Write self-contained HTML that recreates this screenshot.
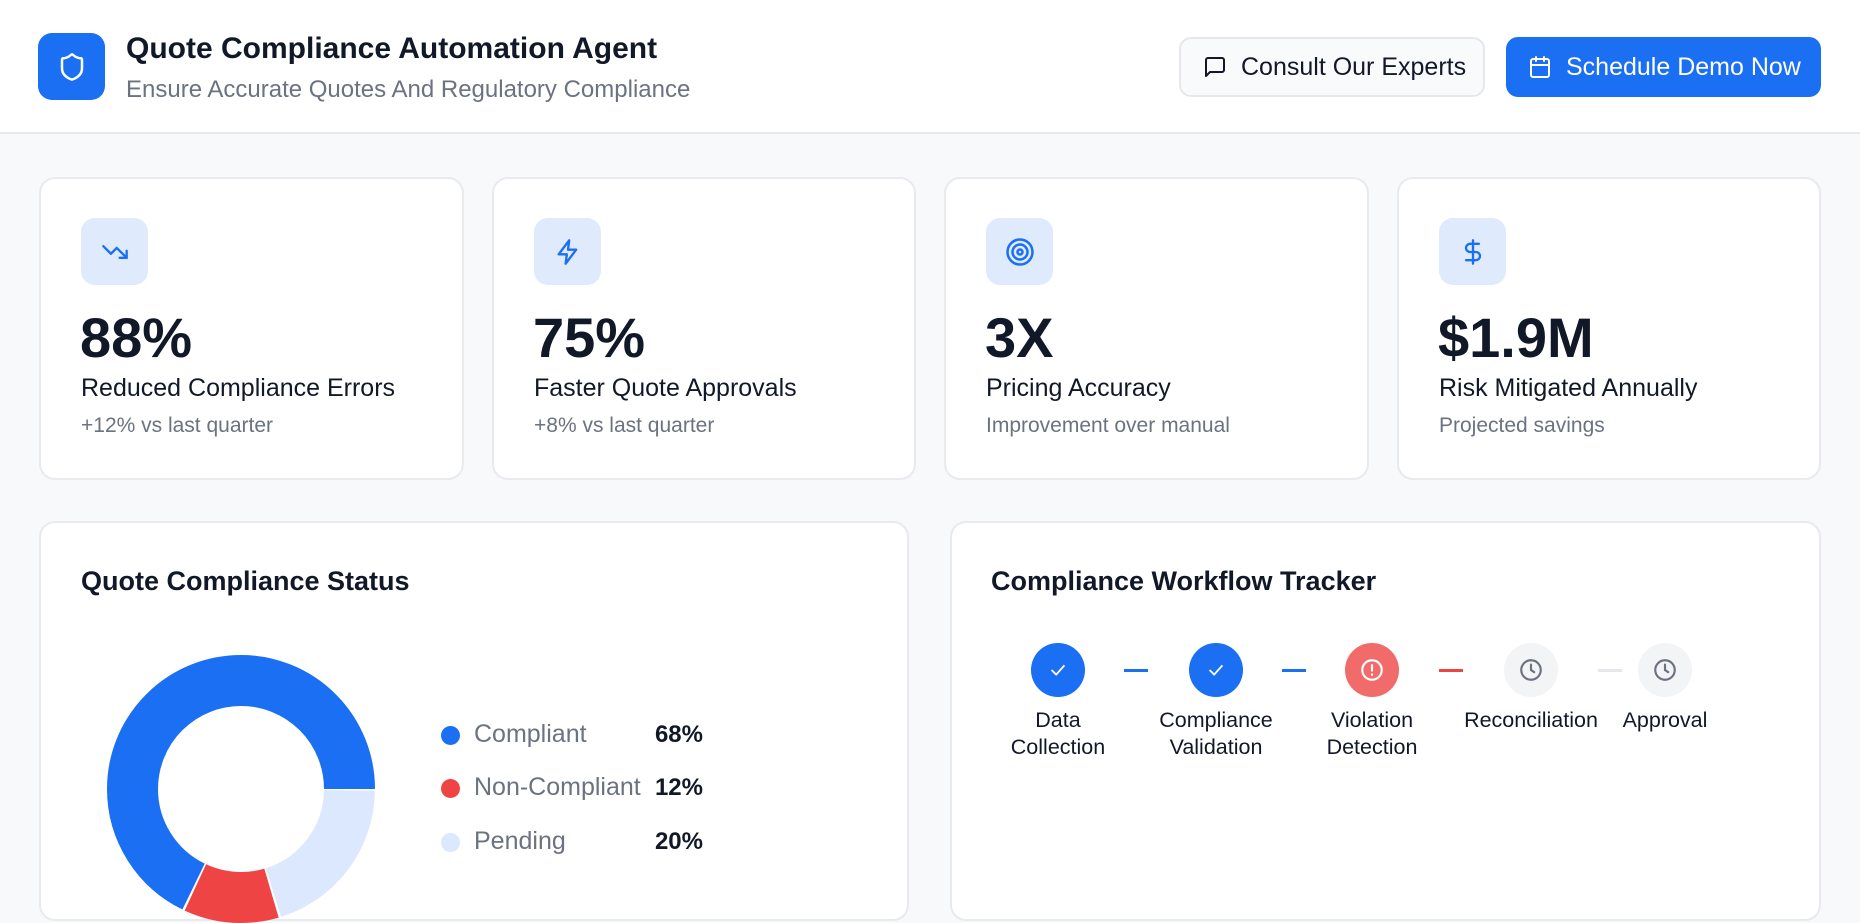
<!DOCTYPE html>
<html><head><meta charset="utf-8"><style>
*{box-sizing:border-box;margin:0;padding:0}
body{width:1860px;height:876px;overflow:hidden;background:#f8f9fb;font-family:"Liberation Sans",sans-serif;color:#111827;position:relative}
.abs{position:absolute}
.hdr{left:0;top:0;width:1860px;height:134px;background:#fff;border-bottom:2px solid #e6e8ec}
.logo{left:38px;top:33px;width:67px;height:67px;background:#1b6ff2;border-radius:14px;display:flex;align-items:center;justify-content:center}
.title{left:126px;top:32px;font-size:30px;font-weight:700;color:#111827}
.sub{left:126px;top:76px;font-size:24px;color:#6b7280}
.btn{top:37px;height:60px;border-radius:12px;display:flex;align-items:center;font-size:25px}
.b1{left:1179px;width:306px;background:#f9fafb;border:2px solid #e5e7eb;color:#111827;padding-left:22px}
.b2{left:1506px;width:315px;background:#1b6ff2;color:#fff;padding-left:22px}
.btn svg{margin-right:14px;flex:none}
.card{background:#fff;border:2px solid #e8eaee;border-radius:16px}
.sc{top:177px;height:303px}
.ib{width:67px;height:67px;background:#dfeafd;border-radius:14px;left:40px;top:39px;display:flex;align-items:center;justify-content:center}
.num{left:39px;top:126px;font-size:56px;font-weight:700;color:#111827}
.lbl{left:40px;top:195px;font-size:25px;color:#111827}
.sm{left:40px;top:235px;font-size:21px;color:#6b7280}
.ct{font-size:27px;font-weight:700;color:#111827}
.leg{font-size:25px;color:#6b7280}
.pct{font-size:24px;font-weight:700;color:#111827;text-align:right;width:70px}
.dot{width:19px;height:19px;border-radius:50%}
.st{width:54px;height:54px;border-radius:50%;display:flex;align-items:center;justify-content:center;top:643px}
.sl{top:707px;font-size:21.5px;color:#111827;text-align:center;width:170px;line-height:27px}
.cn{top:669px;width:24px;height:3px}
</style></head><body>
<div class="abs hdr"></div>
<div class="abs logo"><svg width="30" height="30" viewBox="0 0 24 24" fill="none" stroke="#fff" stroke-width="2" stroke-linecap="round" stroke-linejoin="round"><path d="M20 13c0 5-3.5 7.5-7.7 9a1 1 0 0 1-.7 0C7.5 20.5 4 18 4 13V6a1 1 0 0 1 1-1c2 0 4.5-1.2 6.2-2.7a1.2 1.2 0 0 1 1.6 0C14.5 3.8 17 5 19 5a1 1 0 0 1 1 1z"/></svg></div>
<div class="abs title">Quote Compliance Automation Agent</div>
<div class="abs sub">Ensure Accurate Quotes And Regulatory Compliance</div>
<div class="abs btn b1"><svg width="24" height="24" viewBox="0 0 24 24" fill="none" stroke="#111827" stroke-width="2" stroke-linejoin="round"><path d="M21 15a2 2 0 0 1-2 2H7l-4 4V5a2 2 0 0 1 2-2h14a2 2 0 0 1 2 2z"/></svg>Consult Our Experts</div>
<div class="abs btn b2"><svg width="24" height="24" viewBox="0 0 24 24" fill="none" stroke="#fff" stroke-width="2" stroke-linecap="round"><rect x="3" y="4" width="18" height="18" rx="2"/><path d="M16 2v4M8 2v4M3 10h18"/></svg>Schedule Demo Now</div>

<div class="abs card sc" style="left:39px;width:425px">
<div class="abs ib"><svg width="28" height="28" viewBox="0 0 24 24" fill="none" stroke="#1b6ff2" stroke-width="2" stroke-linecap="round" stroke-linejoin="round"><path d="M22 17l-8.5-8.5-5 5L2 7"/><path d="M16 17h6v-6"/></svg></div>
<div class="abs num">88%</div><div class="abs lbl">Reduced Compliance Errors</div><div class="abs sm">+12% vs last quarter</div></div>
<div class="abs card sc" style="left:492px;width:424px">
<div class="abs ib"><svg width="28" height="28" viewBox="0 0 24 24" fill="none" stroke="#1b6ff2" stroke-width="2" stroke-linejoin="round"><path d="M13 2L4 14h7l-1 8 9-12h-7z"/></svg></div>
<div class="abs num">75%</div><div class="abs lbl">Faster Quote Approvals</div><div class="abs sm">+8% vs last quarter</div></div>
<div class="abs card sc" style="left:944px;width:425px">
<div class="abs ib"><svg width="30" height="30" viewBox="0 0 24 24" fill="none" stroke="#1b6ff2" stroke-width="2"><circle cx="12" cy="12" r="10"/><circle cx="12" cy="12" r="6"/><circle cx="12" cy="12" r="2"/></svg></div>
<div class="abs num">3X</div><div class="abs lbl">Pricing Accuracy</div><div class="abs sm">Improvement over manual</div></div>
<div class="abs card sc" style="left:1397px;width:424px">
<div class="abs ib"><svg width="28" height="28" viewBox="0 0 24 24" fill="none" stroke="#1b6ff2" stroke-width="2" stroke-linecap="round"><path d="M12 2v20M17 5H9.5a3.5 3.5 0 0 0 0 7h5a3.5 3.5 0 0 1 0 7H6"/></svg></div>
<div class="abs num">$1.9M</div><div class="abs lbl">Risk Mitigated Annually</div><div class="abs sm">Projected savings</div></div>

<div class="abs card" style="left:39px;top:521px;width:870px;height:400px"></div>
<div class="abs ct" style="left:81px;top:566px">Quote Compliance Status</div>
<svg class="abs" style="left:107px;top:655px" width="268" height="268" viewBox="0 0 268 268">
<g transform="translate(134 134) scale(1 -1)" fill="none" stroke-width="51">
<circle r="108.5" stroke="#1b6ff2" stroke-dasharray="462 220"/>
<circle r="108.5" stroke="#ef4444" stroke-dasharray="0 464 78 200"/>
<circle r="108.5" stroke="#dce8fd" stroke-dasharray="0 544 136 2"/>
</g></svg>
<div class="abs dot" style="left:441px;top:726px;background:#1b6ff2"></div>
<div class="abs leg" style="left:474px;top:720px">Compliant</div><div class="abs pct" style="left:633px;top:721px">68%</div>
<div class="abs dot" style="left:441px;top:779px;background:#ef4444"></div>
<div class="abs leg" style="left:474px;top:773px">Non-Compliant</div><div class="abs pct" style="left:633px;top:774px">12%</div>
<div class="abs dot" style="left:441px;top:833px;background:#dce8fd"></div>
<div class="abs leg" style="left:474px;top:827px">Pending</div><div class="abs pct" style="left:633px;top:828px">20%</div>

<div class="abs card" style="left:950px;top:521px;width:871px;height:400px"></div>
<div class="abs ct" style="left:991px;top:566px">Compliance Workflow Tracker</div>
<div class="abs st" style="left:1031px;background:#1b6ff2"><svg width="22" height="22" viewBox="0 0 24 24" fill="none" stroke="#fff" stroke-width="2"><path d="M5 12l5 5 9-10"/></svg></div>
<div class="abs st" style="left:1189px;background:#1b6ff2"><svg width="22" height="22" viewBox="0 0 24 24" fill="none" stroke="#fff" stroke-width="2"><path d="M5 12l5 5 9-10"/></svg></div>
<div class="abs st" style="left:1345px;background:#f26b6b"><svg width="26" height="26" viewBox="0 0 24 24" fill="none" stroke="#fff" stroke-width="2" stroke-linecap="round"><circle cx="12" cy="12" r="9"/><path d="M12 7.5v5M12 16v.5"/></svg></div>
<div class="abs st" style="left:1504px;background:#f3f4f6"><svg width="26" height="26" viewBox="0 0 24 24" fill="none" stroke="#6b7280" stroke-width="2" stroke-linecap="round"><circle cx="12" cy="12" r="9"/><path d="M12 7v5l3 2"/></svg></div>
<div class="abs st" style="left:1638px;background:#f3f4f6"><svg width="26" height="26" viewBox="0 0 24 24" fill="none" stroke="#6b7280" stroke-width="2" stroke-linecap="round"><circle cx="12" cy="12" r="9"/><path d="M12 7v5l3 2"/></svg></div>
<div class="abs cn" style="left:1124px;background:#1b6ff2"></div>
<div class="abs cn" style="left:1282px;background:#1b6ff2"></div>
<div class="abs cn" style="left:1439px;background:#ef4444"></div>
<div class="abs cn" style="left:1598px;background:#e5e7eb"></div>
<div class="abs sl" style="left:973px">Data<br>Collection</div>
<div class="abs sl" style="left:1131px">Compliance<br>Validation</div>
<div class="abs sl" style="left:1287px">Violation<br>Detection</div>
<div class="abs sl" style="left:1446px">Reconciliation</div>
<div class="abs sl" style="left:1580px">Approval</div>
</body></html>
